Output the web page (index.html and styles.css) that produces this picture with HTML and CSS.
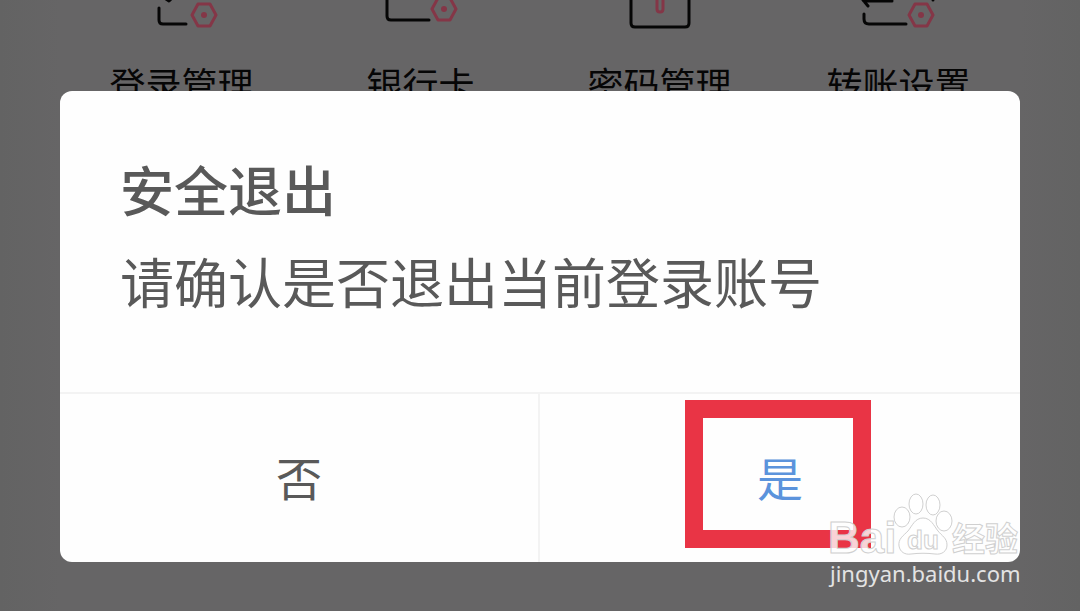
FILE: index.html
```html
<!DOCTYPE html>
<html lang="zh-CN">
<head>
<meta charset="utf-8">
<meta name="viewport" content="width=device-width, initial-scale=1">
<title>安全退出</title>
<link rel="stylesheet" href="styles.css">
</head>
<body>
<main class="screen">
  <nav class="menu" aria-label="设置">
    <a class="menu-item" href="#login">
      <svg class="menu-icon" viewBox="0 0 80 32" aria-hidden="true">
        <path class="ink" d="M17 8v12q0 4 4 4h23M24-1l3 2 3-3"/>
        <path class="accent" d="M50 15l6-11h12l6 11-6 11H56z"/><circle class="dot" cx="62" cy="15" r="3"/>
      </svg>
      <span>登录管理</span>
    </a>
    <a class="menu-item" href="#card">
      <svg class="menu-icon" viewBox="0 0 80 32" aria-hidden="true">
        <path class="ink" d="M6-4v20q0 4 4 4h38"/>
        <path class="accent" d="M51 9l6-11h12l6 11-6 11H57z"/><circle class="dot" cx="63" cy="9" r="3"/>
      </svg>
      <span>银行卡</span>
    </a>
    <a class="menu-item" href="#password">
      <svg class="menu-icon" viewBox="0 0 80 32" aria-hidden="true">
        <path class="ink" d="M11-4v27q0 4 4 4h50q4 0 4-4V-4"/>
        <path class="accent" d="M37-4v13q0 3 3 3t3-3V-4"/>
      </svg>
      <span>密码管理</span>
    </a>
    <a class="menu-item" href="#transfer">
      <svg class="menu-icon" viewBox="0 0 80 32" aria-hidden="true">
        <path class="ink" d="M5 14v5q0 5 5 5h37M5 1h28M4 0l5 6M74-2v2"/>
        <path class="accent" d="M50 15l6-11h12l6 11-6 11H56z"/><circle class="dot" cx="62" cy="15" r="3"/>
      </svg>
      <span>转账设置</span>
    </a>
  </nav>
  <div class="overlay">
    <section class="dialog" role="dialog" aria-labelledby="title" aria-describedby="message">
      <div class="dialog-body">
        <h1 class="dialog-title" id="title">安全退出</h1>
        <p class="dialog-message" id="message">请确认是否退出当前登录账号</p>
      </div>
      <div class="dialog-actions">
        <button class="action action-no" type="button">否</button>
        <button class="action action-yes" type="button">是<span class="highlight"></span></button>
      </div>
    </section>
  </div>
  <div class="watermark">
    <svg class="watermark-logo" viewBox="0 0 196 72" aria-label="Baidu经验">
      <g class="mark">
        <text class="mark-latin" x="0" y="66">Bai</text>
        <ellipse cx="74" cy="30" rx="8" ry="10"/>
        <ellipse cx="88" cy="17" rx="7" ry="10"/>
        <ellipse cx="105" cy="18" rx="7" ry="10"/>
        <ellipse cx="116" cy="34" rx="8" ry="10"/>
        <path d="M95 31c-8 0-11 8-15 13-5 5-10 8-9 15 1 6 6 9 12 8 8-1 16-1 24 0 7 1 12-3 12-9 0-7-5-9-9-14s-7-13-15-13z"/>
        <text class="mark-du" x="79" y="62">du</text>
        <text class="mark-han" x="124" y="64">经验</text>
      </g>
    </svg>
    <span class="watermark-url">jingyan.baidu.com</span>
  </div>
</main>
</body>
</html>
```
FILE: styles.css
```css
* {
  box-sizing: border-box;
}

body {
  margin: 0;
  background: #646464;
  font-family: "Noto Sans CJK SC", sans-serif;
}

.screen {
  position: relative;
  min-height: 100vh;
  overflow: hidden;
  background: linear-gradient(90deg, #636363 0, #666566 60px, #666566 calc(100% - 60px), #636363 100%);
}

.menu {
  display: grid;
  grid-template-columns: repeat(4, 1fr);
  padding: 0 62px;
}

.menu-item {
  display: flex;
  flex-direction: column;
  align-items: center;
  gap: 29px;
  color: #060606;
  font-size: 36px;
  line-height: 44px;
  text-decoration: none;
}

.menu-icon {
  width: 80px;
  height: 32px;
}

.ink,
.accent {
  fill: none;
  stroke: #060606;
  stroke-width: 3;
  stroke-linecap: round;
  stroke-linejoin: round;
}

.accent {
  stroke: #843647;
}

.dot {
  fill: #843647;
}

.overlay {
  position: absolute;
  inset: 0;
  padding: 91px 60px 49px;
}

.dialog {
  display: flex;
  flex-direction: column;
  height: 100%;
  border-radius: 12px;
  background: #fefefe;
  color: #595959;
}

.dialog-body {
  flex: 1;
  padding: 62px 60px 0;
}

.dialog-title,
.dialog-message {
  margin: 0;
  font-size: 54px;
  line-height: 72px;
  font-weight: 500;
}

.dialog-message {
  margin-top: 20px;
  font-weight: 400;
}

.dialog-actions {
  display: grid;
  grid-template-columns: 1fr 1fr;
  border-top: 2px solid #f3f3f3;
}

.action {
  position: relative;
  height: 168px;
  padding: 0 0 4px;
  border: 0;
  background: transparent;
  color: #595959;
  font: 400 46px/72px "Noto Sans CJK SC", sans-serif;
}

.action-no {
  border-right: 2px solid #f3f3f3;
}

.action-yes {
  color: #5b93dc;
}

.highlight {
  position: absolute;
  top: 6px;
  left: calc(50% - 95px);
  width: 186px;
  height: 148px;
  border: 18px solid #e93445;
}

.watermark {
  position: absolute;
  right: 56px;
  bottom: 24px;
  display: flex;
  flex-direction: column;
  width: 196px;
}

.watermark-logo {
  width: 196px;
  height: 72px;
  overflow: visible;
}

.mark {
  fill: rgb(255 255 255 / 80%);
  stroke: #d0d0d0;
  stroke-width: 1;
}

.mark text {
  font-weight: 700;
}

.mark-latin {
  font-family: "Liberation Sans", sans-serif;
  font-size: 44px;
}

.mark-du {
  font-family: "Liberation Sans", sans-serif;
  font-size: 26px;
}

.mark-han {
  font-family: "Noto Sans CJK SC", sans-serif;
  font-size: 33px;
}

.watermark-url {
  padding-left: 2px;
  color: #e3e3e3;
  font: 400 22px/28px "Noto Sans", sans-serif;
  white-space: nowrap;
}
```
